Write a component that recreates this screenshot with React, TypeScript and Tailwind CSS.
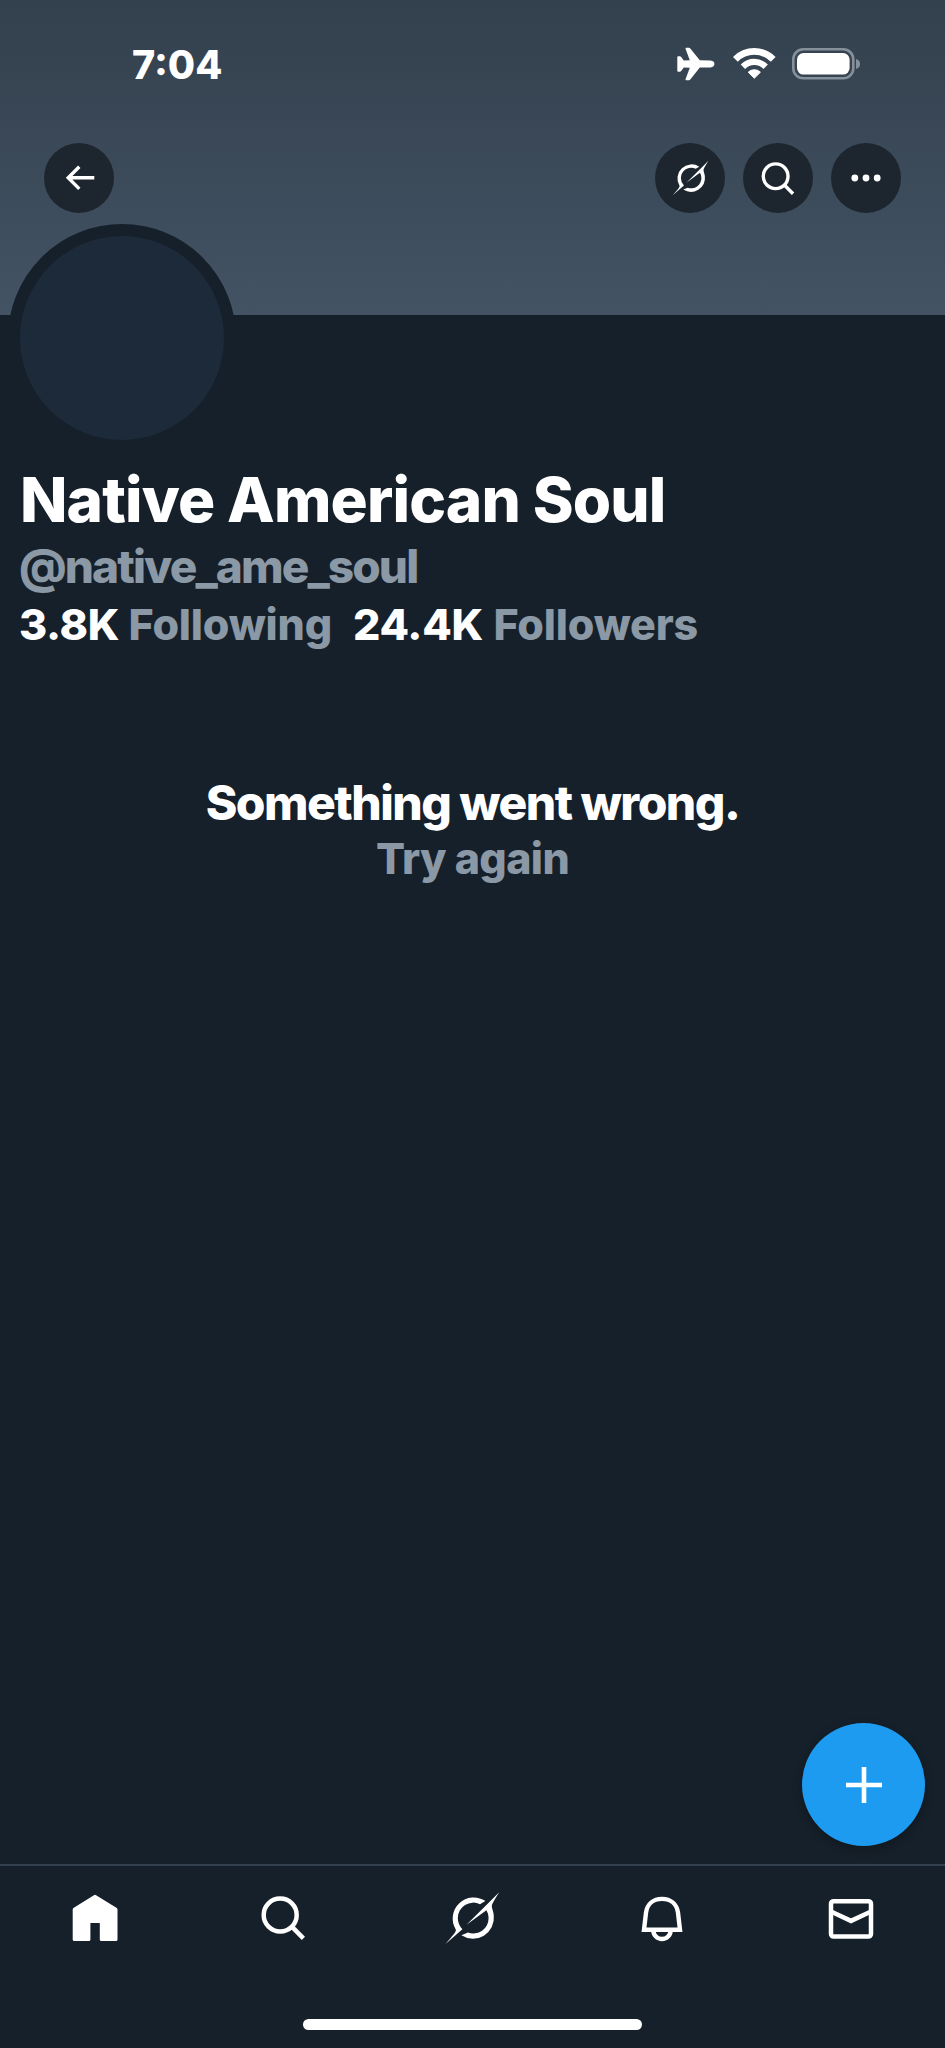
import type { ReactNode } from "react";

function GrokIcon({ className }: { className: string }) {
  return (
    <svg viewBox="0 0 60 60" className={className} fill="currentColor">
      <path d="M42.4 13.1A21 21 0 0 0 12.6 41.2C13.6 42.8 12.6 44.4 2.5 56L19.4 41.2Q14.8 36.4 14.8 30A15.4 15.4 0 0 1 37 16.2Z" />
      <path d="M56.2 4.3L23.5 36.7L43.4 22.2Q45.6 25.6 45.6 30A15.4 15.4 0 0 1 25 44.6L18.4 47.3A21 21 0 0 0 50.8 27.5C50.5 23 48.6 20.6 48.8 17.6Q49.2 15.2 56.2 4.3Z" />
    </svg>
  );
}

function SearchIcon({ className }: { className: string }) {
  return (
    <svg viewBox="0 0 60 60" className={className} fill="none" stroke="currentColor" strokeWidth="4.5">
      <circle cx="26.2" cy="27" r="16.5" />
      <path d="M37.8 38.6L49.4 50.4" />
    </svg>
  );
}

function RoundButton({ label, children }: { label: string; children: ReactNode }) {
  return (
    <button aria-label={label} className="flex size-[70px] items-center justify-center rounded-full bg-[#1d262e] text-white">
      {children}
    </button>
  );
}

function StatusBar() {
  return (
    <div className="flex h-[128px] items-start justify-between pr-[84px] pl-[132px] pt-[41px] text-white">
      <span className="font-[Inter,sans-serif] text-[39.5px] leading-[48px] font-extrabold">7:04</span>
      <div className="flex items-center pt-[6px]">
        <svg width="38" height="34" viewBox="0 0 38 34" fill="currentColor">
          <path d="M9.2 .8H11.8Q12.8 .8 13.5 1.7L22.8 13.2L33.5 13.5Q37.4 14 37.4 16.9Q37.4 19.8 33.5 20.4L22.8 20.6L13.5 32.2Q12.8 33.2 11.8 33.2H9.2Q8.2 33.2 8.6 32L12.8 20.7L6.8 20.5L4.2 24Q3.7 24.7 2.8 24.7H1.2Q.3 24.7 .3 23.8V10.1Q.3 9.2 1.2 9.2H2.8Q3.7 9.2 4.2 9.9L6.8 13.4L12.8 13.2L8.6 2Q8.2 .8 9.2 .8Z" />
        </svg>
        <svg width="43" height="34" viewBox="0 0 43 34" className="ml-[18px]" fill="none" stroke="currentColor">
          <path d="M2.4 12.3A26.7 26.7 0 0 1 40.2 12.3" strokeWidth="6.8" />
          <path d="M9.9 19.7A16.1 16.1 0 0 1 32.7 19.7" strokeWidth="6.2" />
          <path d="M21.3 31.2L15.2 25.2A8.7 8.7 0 0 1 27.4 25.2Z" fill="currentColor" strokeWidth="1" strokeLinejoin="round" />
        </svg>
        <svg width="69" height="34" viewBox="0 0 69 34" className="ml-[16px]">
          <rect x="1.3" y="2.3" width="60" height="29" rx="10" fill="none" stroke="#85909b" strokeWidth="2.6" />
          <rect x="5" y="6" width="52.6" height="21.6" rx="6.5" fill="#fff" />
          <path d="M64 12Q68 13 68 17Q68 21 64 22Z" fill="#85909b" />
        </svg>
      </div>
    </div>
  );
}

function Header() {
  return (
    <header className="h-[315px] bg-linear-to-b from-[#33404d] to-[#435364]">
      <StatusBar />
      <div className="flex justify-between px-[44px] pt-[15px]">
        <RoundButton label="Back">
          <svg width="70" height="70" viewBox="0 0 70 70" fill="none" stroke="currentColor" strokeWidth="3.4">
            <path d="M50.3 34.8H24.5M35.3 23.7L24.2 34.8L35.3 45.9" />
          </svg>
        </RoundButton>
        <div className="flex gap-[18px]">
          <RoundButton label="Grok"><GrokIcon className="ml-[2px] size-10" /></RoundButton>
          <RoundButton label="Search"><SearchIcon className="size-[45px]" /></RoundButton>
          <RoundButton label="More">
            <svg width="36" height="12" viewBox="0 0 36 12" fill="currentColor">
              <circle cx="6.8" cy="6" r="3.4" />
              <circle cx="18" cy="6" r="3.4" />
              <circle cx="29.2" cy="6" r="3.4" />
            </svg>
          </RoundButton>
        </div>
      </div>
    </header>
  );
}

function Profile() {
  return (
    <section>
      <div className="relative -mt-[91px] ml-[8px] size-[228px] rounded-full border-[12px] border-[#16202a] bg-[#1d2a3a]" />
      <h1 className="ml-[20px] mt-[10px] h-[76px] text-[62px] leading-[76px] font-extrabold tracking-[-0.85px] whitespace-nowrap text-white">Native American Soul</h1>
      <p className="ml-[19px] h-[56px] text-[46px] leading-[56px] font-extrabold tracking-[-1.9px] whitespace-nowrap text-[#8b98a5]">@native_ame_soul</p>
      <div className="ml-[19px] mt-[3px] flex h-[54px] text-[43px] leading-[54px] font-extrabold whitespace-nowrap text-[#8b98a5]">
        <p className="flex w-[334px] justify-between pr-[21px]"><span className="tracking-[-0.3px] text-white">3.8K</span><span className="tracking-[-0.2px]">Following</span></p>
        <p className="flex w-[345px] justify-between"><span className="tracking-[-0.3px] text-white">24.4K</span><span className="tracking-[-0.2px]">Followers</span></p>
      </div>
    </section>
  );
}

function ErrorMessage() {
  return (
    <section className="mt-[122px] flex flex-col items-center whitespace-nowrap">
      <h2 className="h-[60px] text-[48px] leading-[60px] font-extrabold tracking-[-1.55px] text-white">Something went wrong.</h2>
      <button className="-mt-[2px] h-[54px] text-[43px] leading-[54px] font-extrabold tracking-[-0.65px] text-[#8b98a5]">Try again</button>
    </section>
  );
}

function TabBar() {
  return (
    <nav className="mt-auto flex h-[184px] flex-col items-center border-t-2 border-[#33404d] bg-[#16202a] text-white">
      <div className="grid w-full grid-cols-5 justify-items-center pt-[22px]">
        <svg width="60" height="60" viewBox="0 0 60 60" fill="currentColor">
          <path d="M28.9 7.2Q30 6.4 31.1 7.2L51.8 20Q52.5 20.5 52.5 21.5V51.5Q52.5 53 51 53H36.2Q34.8 53 34.8 51.5V35H25.4V51.5Q25.4 53 24 53H9.2Q7.7 53 7.7 51.5V21.5Q7.7 20.5 8.4 20Z" />
        </svg>
        <SearchIcon className="size-[60px]" />
        <GrokIcon className="size-[60px]" />
        <svg width="60" height="60" viewBox="0 0 60 60" fill="none" stroke="currentColor" strokeWidth="4.4">
          <path d="M12 41.7L14 24.8C15.1 16.2 21.2 10.9 30 10.9S44.9 16.2 46 24.8L48 41.7Z" />
          <path d="M21.4 42.4A8.6 8.6 0 0 0 38.6 42.4" />
        </svg>
        <svg width="60" height="60" viewBox="0 0 60 60" fill="none" stroke="currentColor" strokeWidth="4.5">
          <rect x="10" y="13.2" width="40" height="35.4" rx="2.6" />
          <path d="M11 24L30 32.9L49 24" />
        </svg>
      </div>
      <div className="mt-[71px] h-[11px] w-[339px] shrink-0 rounded-full bg-white" />
    </nav>
  );
}

export default function App() {
  return (
    <main className="relative flex h-[2048px] w-[945px] flex-col overflow-hidden bg-[#16202a] font-[Inter,sans-serif]">
      <Header />
      <Profile />
      <ErrorMessage />
      <button aria-label="New post" className="absolute right-[20px] bottom-[202px] flex size-[123px] items-center justify-center rounded-full bg-[#1d9bf0] text-white shadow-[0_3px_10px_rgba(0,0,0,0.3)]">
        <svg width="36" height="36" viewBox="0 0 36 36" stroke="currentColor" strokeWidth="4.6">
          <path d="M18 0V36M0 18H36" />
        </svg>
      </button>
      <TabBar />
    </main>
  );
}
